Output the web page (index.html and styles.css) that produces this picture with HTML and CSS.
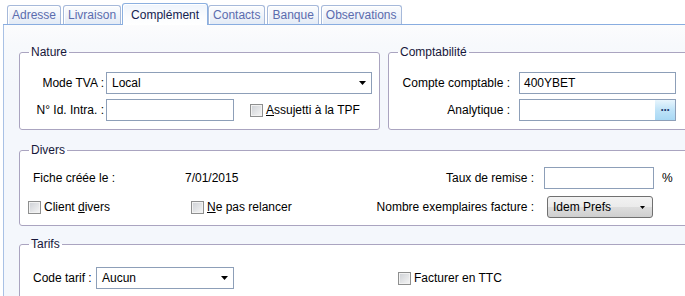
FILE: index.html
```html
<!DOCTYPE html>
<html lang="fr">
<head>
<meta charset="utf-8">
<title>Complément</title>
<link rel="stylesheet" href="styles.css">
</head>
<body>
<div class="window">
  <div class="tabstrip">
    <div class="tab">Adresse</div>
    <div class="tab">Livraison</div>
    <div class="tab tab-active">Complément</div>
    <div class="tab">Contacts</div>
    <div class="tab">Banque</div>
    <div class="tab">Observations</div>
  </div>
  <div class="panel">
    <div class="top-row">
      <fieldset class="group group-nature">
        <legend>Nature</legend>
        <div class="form-grid nature-grid">
          <span class="lbl">Mode TVA :</span>
          <div class="select select-tva"><span>Local</span><svg class="arrow" width="7" height="4" viewBox="0 0 7 4"><path d="M0 0H7L3.5 4Z"/></svg></div>
          <span class="lbl">N° Id. Intra. :</span>
          <div class="inline">
            <div class="field field-intra"></div>
            <label class="check check-tpf"><span class="box"></span><span><u>A</u>ssujetti à la TPF</span></label>
          </div>
        </div>
      </fieldset>
      <fieldset class="group group-compta">
        <legend>Comptabilité</legend>
        <div class="form-grid compta-grid">
          <span class="lbl">Compte comptable :</span>
          <div class="field field-compta"><span>400YBET</span></div>
          <span class="lbl">Analytique :</span>
          <div class="field field-compta field-btn"><span></span><span class="dots">&middot;&middot;&middot;</span></div>
        </div>
      </fieldset>
    </div>

    <fieldset class="group group-wide group-divers">
      <legend>Divers</legend>
      <div class="drow drow-1">
        <span class="cell-fiche">Fiche créée le :</span>
        <span class="cell-date">7/01/2015</span>
        <span class="lbl cell-rlabel">Taux de remise :</span>
        <div class="field field-taux"></div>
        <span class="pct">%</span>
      </div>
      <div class="drow drow-2">
        <label class="check cell-client"><span class="box"></span><span>Client <u>d</u>ivers</span></label>
        <label class="check cell-relance"><span class="box"></span><span><u>N</u>e pas relancer</span></label>
        <span class="lbl cell-rlabel2">Nombre exemplaires facture :</span>
        <div class="select select-btn"><span>Idem Prefs</span><svg class="arrow" width="5" height="3" viewBox="0 0 5 3"><path d="M0 0H5L2.5 3Z"/></svg></div>
      </div>
    </fieldset>

    <fieldset class="group group-wide group-tarifs">
      <legend>Tarifs</legend>
      <div class="trow">
        <span class="cell-code">Code tarif :</span>
        <div class="select select-tarif"><span>Aucun</span><svg class="arrow" width="7" height="4" viewBox="0 0 7 4"><path d="M0 0H7L3.5 4Z"/></svg></div>
        <label class="check check-ttc"><span class="box"></span><span>Facturer en TTC</span></label>
      </div>
    </fieldset>
  </div>
</div>
</body>
</html>
```

FILE: styles.css
```css
html, body {
  margin: 0;
  padding: 0;
  background: #ffffff;
}
body {
  width: 685px;
  height: 296px;
  overflow: hidden;
  font-family: "Liberation Sans", Arial, sans-serif;
  font-size: 12px;
  color: #000;
}
.window {
  width: 685px;
  height: 296px;
  overflow: hidden;
}

/* Tabs */
.tabstrip {
  display: flex;
  align-items: flex-end;
  height: 24px;
  margin-left: 3px;
  padding-left: 4px;
  border-bottom: 1px solid #89ade0;
}
.tab {
  box-sizing: border-box;
  height: 19px;
  padding: 2px 4px 0;
  margin-right: 2px;
  border: 1px solid #a6b9da;
  border-bottom: none;
  border-radius: 3px 3px 0 0;
  background: linear-gradient(#fcfdfe, #e4ebf6);
  box-shadow: inset 1px 1px 0 #ffffff;
  color: #5b6cae;
  line-height: 15px;
  white-space: nowrap;
}
.tab-active {
  height: 22px;
  padding: 4px 8px 0;
  margin: 0 -1px -1px -1px;
  position: relative;
  z-index: 1;
  border-color: #8cb0e0;
  background: linear-gradient(#eef4fc, #fbfcfe 60%, #ffffff);
  color: #14224f;
}
.tab-active + .tab {
  margin-left: 1px;
}

/* Panel */
.panel {
  margin-left: 3px;
  height: 272px;
  border-left: 1px solid #a9c1e5;
  padding-left: 15px;
  background: linear-gradient(#fcfcfd 0, #f7f9fc 20px, #f4f7fc 60px);
  overflow: hidden;
}
.top-row {
  display: flex;
  gap: 8px;
  margin-top: 20px;
  width: 720px;
}

/* Group boxes */
.group {
  box-sizing: border-box;
  margin: 0;
  min-width: 0;
  border: 1px solid #aaa4c0;
  border-radius: 3px;
  background: #ffffff;
}
.group legend {
  margin-left: 9px;
  padding: 0 2px;
  line-height: 14px;
  color: #17173a;
}
.group-nature {
  width: 361px;
  padding: 13px 0 8px 0;
}
.group-compta {
  width: 330px;
  padding: 13px 0 8px 0;
}
.group-wide {
  width: 700px;
}
.group-divers {
  margin-top: 13px;
  padding: 10px 0 7px 0;
}
.group-tarifs {
  margin-top: 11px;
  padding: 16px 0 10px 0;
}

/* Form grids */
.form-grid {
  display: grid;
  align-items: center;
  row-gap: 5px;
}
.nature-grid {
  grid-template-columns: 84px auto;
  column-gap: 2px;
}
.compta-grid {
  grid-template-columns: 121px 157px;
  column-gap: 9px;
}
.lbl {
  text-align: right;
  white-space: nowrap;
}
.inline {
  display: flex;
  align-items: center;
}

/* Inputs */
.field, .select {
  box-sizing: border-box;
  height: 22px;
  border: 1px solid #8d9fb8;
  background: #ffffff;
  display: flex;
  align-items: center;
  padding-left: 4px;
  white-space: nowrap;
}
.select {
  justify-content: space-between;
  padding-left: 5px;
}
.arrow {
  display: block;
  fill: #000;
}
.select-tva {
  width: 266px;
  padding-right: 5px;
}
.field-intra {
  width: 128px;
}
.field-compta {
  width: 157px;
}
.field-btn {
  justify-content: space-between;
  padding-right: 0;
}
.dots {
  box-sizing: border-box;
  width: 20px;
  height: 20px;
  display: flex;
  align-items: center;
  justify-content: center;
  background: linear-gradient(#e8f5fd, #bfe3f8 50%, #a8d8f4);
  color: #1d3a6e;
  font-weight: bold;
  font-size: 12px;
  letter-spacing: -1px;
  line-height: 1;
}

/* Checkboxes */
.check {
  display: inline-flex;
  align-items: center;
  gap: 3px;
  white-space: nowrap;
}
.box {
  box-sizing: border-box;
  width: 13px;
  height: 13px;
  border: 1px solid #8e8f8f;
  background: linear-gradient(135deg, #cdd0d5, #f6f6f6);
  box-shadow: inset 0 0 0 1px #f2f2f2;
}
.check-tpf {
  margin-left: 16px;
}

/* Divers */
.drow {
  display: flex;
  align-items: center;
  height: 22px;
}
.drow-1 {
  padding-left: 13px;
}
.drow-2 {
  margin-top: 7px;
  padding-left: 8px;
}
.cell-fiche {
  width: 152px;
}
.cell-date {
  width: 200px;
}
.cell-rlabel {
  width: 149px;
  margin-right: 10px;
}
.field-taux {
  width: 110px;
}
.pct {
  margin-left: 8px;
}
.cell-client {
  width: 163px;
}
.cell-relance {
  width: 150px;
}
.cell-rlabel2 {
  width: 193px;
  margin-right: 13px;
}
.select-btn {
  width: 106px;
  height: 22px;
  border: 1px solid #707070;
  border-radius: 3px;
  background: linear-gradient(#f2f2f2 0, #ebebeb 50%, #dddddd 51%, #cfcfcf 100%);
  padding-left: 5px;
  padding-right: 7px;
}

/* Tarifs */
.trow {
  display: flex;
  align-items: center;
  height: 22px;
  padding-left: 13px;
}
.cell-code {
  width: 63px;
}
.select-tarif {
  width: 138px;
  padding-right: 5px;
}
.check-ttc {
  margin-left: 164px;
}
```
